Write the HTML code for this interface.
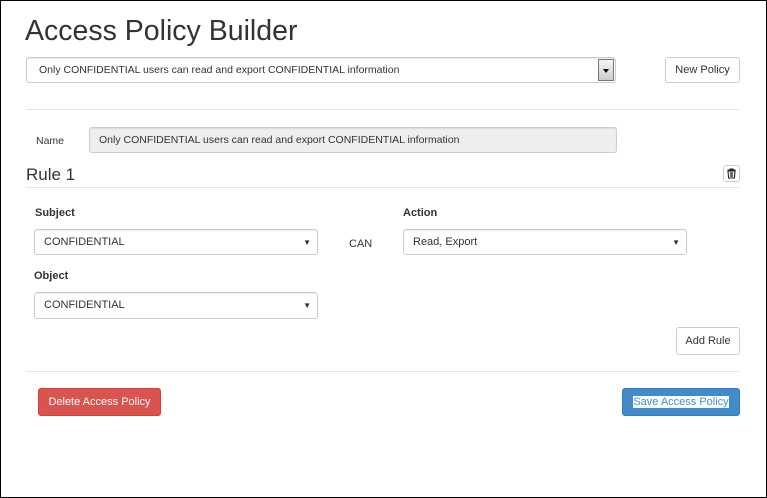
<!DOCTYPE html>
<html><head><meta charset="utf-8"><style>
*{box-sizing:border-box;margin:0;padding:0}
html,body{width:767px;height:498px;overflow:hidden;background:#fff}
body{font-family:"Liberation Sans",Arial,sans-serif;color:#333;position:relative}
.frame{position:absolute;left:0;top:0;width:767px;height:498px;border:1px solid #000}
.a{position:absolute}
.inp{position:absolute;border:1px solid #ccc;border-radius:3px;background:#fff;font-size:11px;line-height:25px;padding-left:9px;color:#333;box-shadow:inset 0 1px 1px rgba(0,0,0,.075)}
.btn{position:absolute;border:1px solid #ccc;border-radius:3px;background:#fff;font-size:11px;text-align:center;color:#333}
.hr{position:absolute;left:26px;width:713px;height:1px;background:#e5e5e5}
.lbl{position:absolute;font-size:11px;font-weight:bold}
.car{position:absolute;right:6px;top:0;font-size:8px}
</style></head><body>
<div class="frame"></div>
<div class="a" style="left:25px;top:15px;font-size:28.5px;color:#333">Access Policy Builder</div>
<div class="inp" style="left:26px;top:57px;width:590px;height:26px;line-height:25px;padding-left:12px;font-size:10.5px">Only CONFIDENTIAL users can read and export CONFIDENTIAL information
 <div style="position:absolute;left:571px;top:1px;width:16px;height:22px;border:1px solid #777;background:linear-gradient(#f4f4f4,#ccc)"><div style="position:absolute;left:4px;top:9px;border-left:3px solid transparent;border-right:3px solid transparent;border-top:4px solid #000"></div></div>
</div>
<div class="btn" style="left:665px;top:57px;width:75px;height:26px;line-height:24px">New Policy</div>
<div class="hr" style="top:109px"></div>
<div class="a" style="left:36px;top:135px;font-size:10.5px">Name</div>
<div class="inp" style="left:89px;top:127px;width:528px;height:26px;line-height:25px;background:#eee;font-size:10.5px">Only CONFIDENTIAL users can read and export CONFIDENTIAL information</div>
<div class="a" style="left:26px;top:165px;font-size:17px">Rule 1</div>
<div class="btn" style="left:723px;top:165px;width:17px;height:17px">
<svg width="15" height="15" viewBox="0 0 15 15" style="position:absolute;left:0;top:0"><path d="M4 5h7l-.6 7H4.6z M3.5 4h8 M6 4V3h3v1" fill="none" stroke="#222" stroke-width="1.1"/><path d="M6.3 6v5M7.5 6v5M8.7 6v5" stroke="#222" stroke-width=".7"/></svg></div>
<div class="hr" style="top:187px"></div>
<div class="lbl" style="left:35px;top:207px">Subject</div>
<div class="inp" style="left:34px;top:229px;width:284px;height:26px">CONFIDENTIAL<span class="car">▼</span></div>
<div class="a" style="left:349px;top:238px;font-size:11px">CAN</div>
<div class="lbl" style="left:403px;top:207px">Action</div>
<div class="inp" style="left:403px;top:229px;width:284px;height:26px">Read, Export<span class="car">▼</span></div>
<div class="lbl" style="left:34px;top:270px">Object</div>
<div class="inp" style="left:34px;top:292px;width:284px;height:27px">CONFIDENTIAL<span class="car">▼</span></div>
<div class="btn" style="left:676px;top:327px;width:64px;height:28px;line-height:27px">Add Rule</div>
<div class="hr" style="top:371px"></div>
<div class="btn" style="left:38px;top:388px;width:123px;height:28px;line-height:27px;background:#d9534f;border-color:#d43f3a;color:#fff">Delete Access Policy</div>
<div class="btn" style="left:622px;top:388px;width:118px;height:28px;line-height:27px;background:#428bca;border-color:#357ebd"><span style="background:#fff;color:#3b8fe0">Save Access Policy</span></div>
</body></html>
